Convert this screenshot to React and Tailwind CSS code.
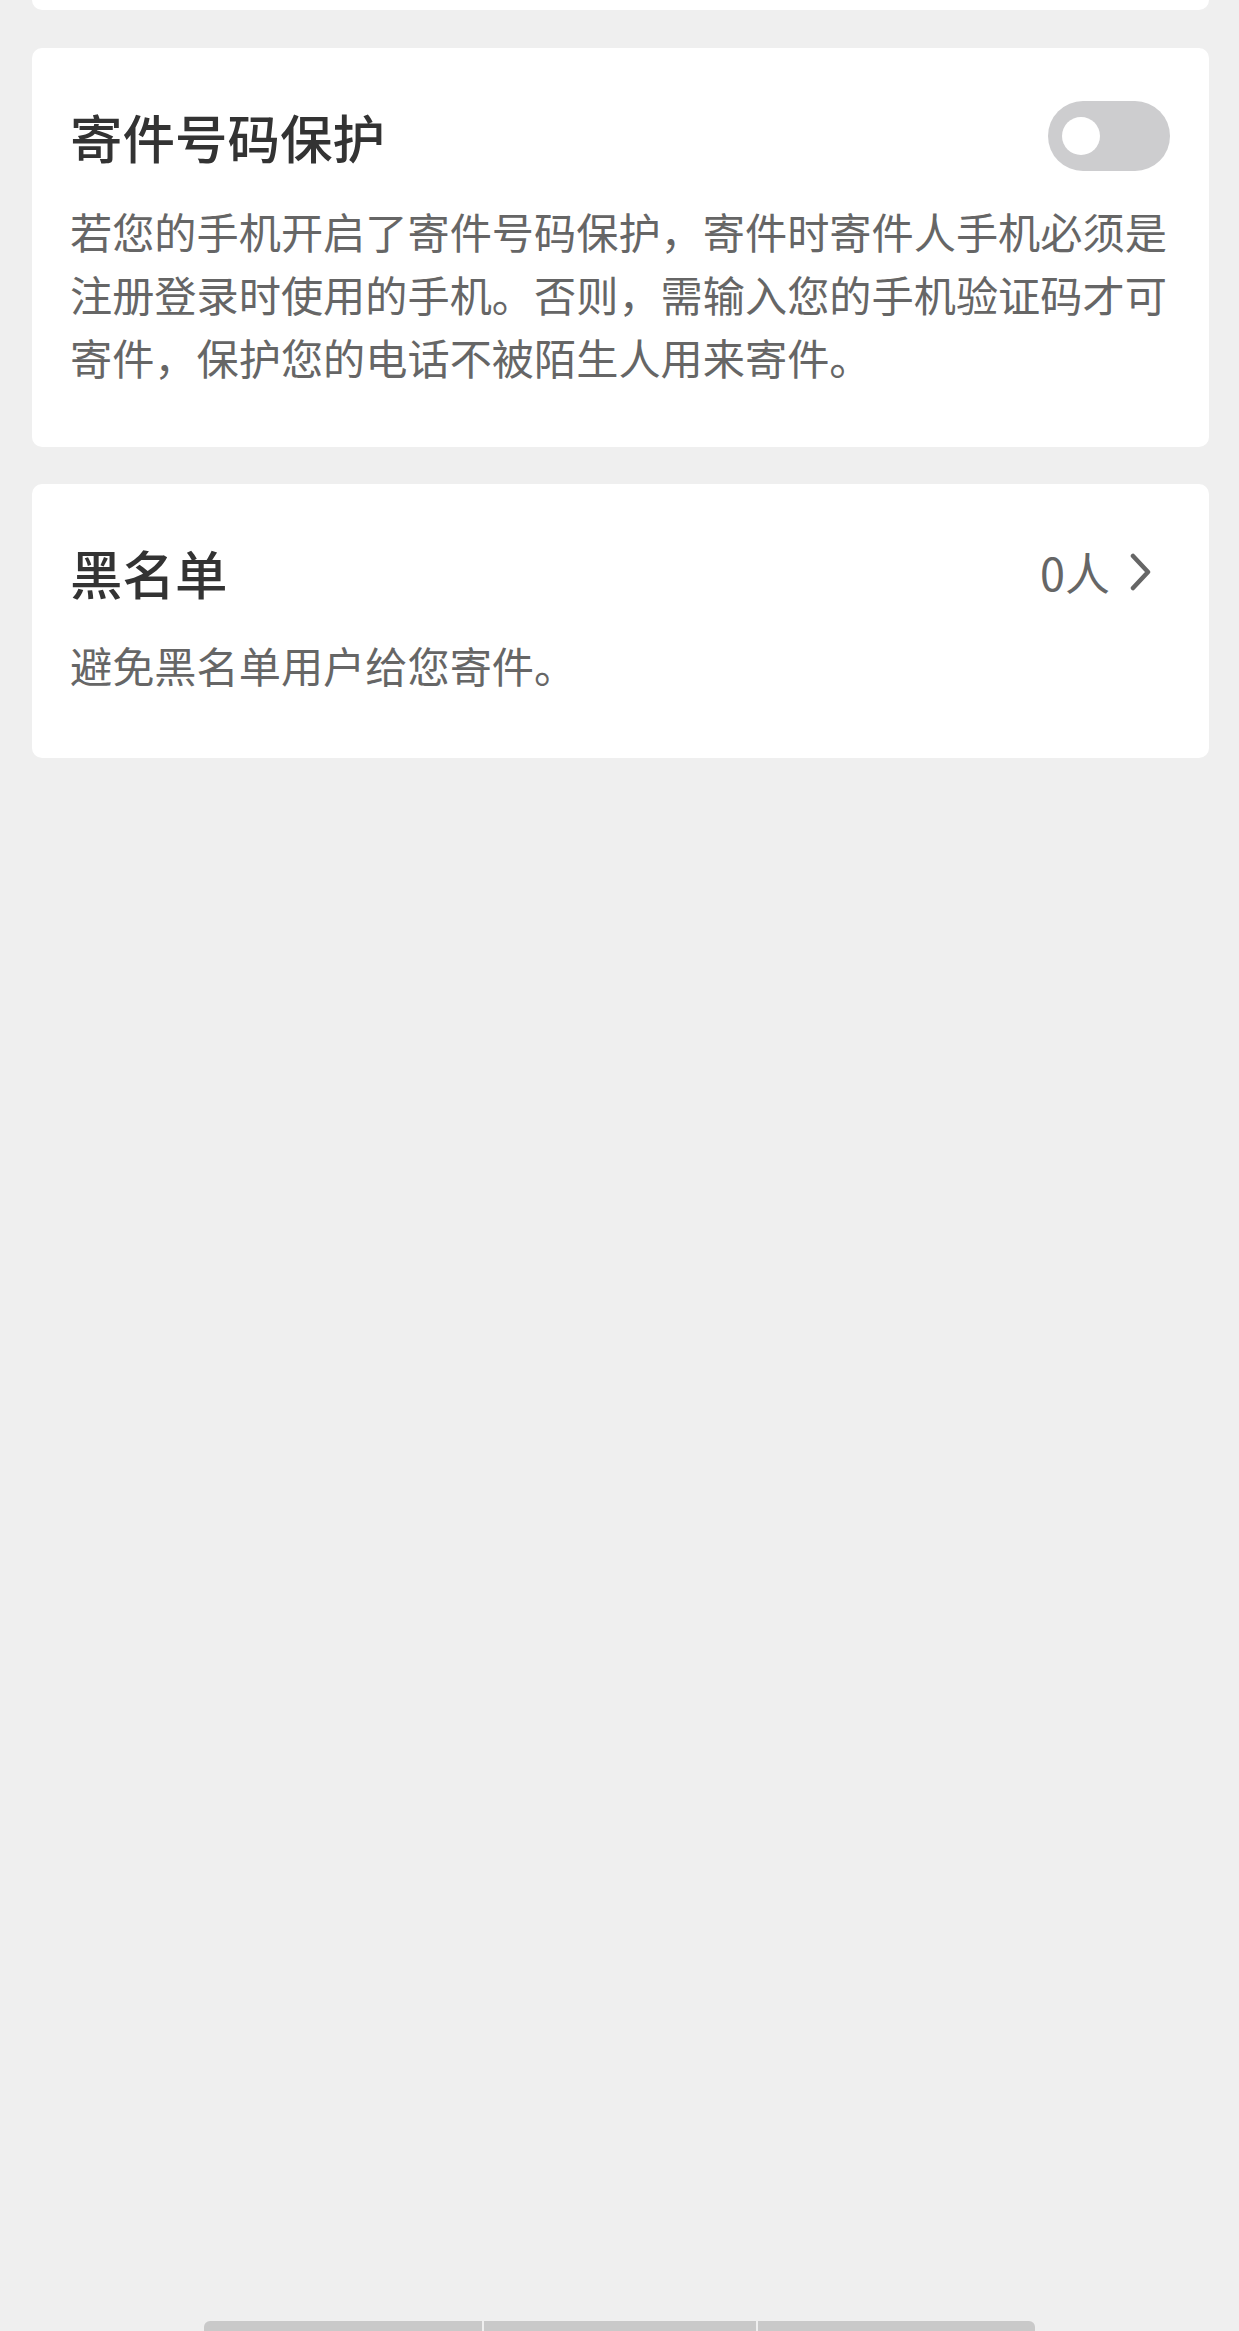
const cjk = { fontFamily: '"Noto Sans CJK SC", "Noto Sans", sans-serif' };

function Toggle() {
    return (
        <div className="w-[122px] h-[70px] rounded-full bg-[#cdcdcf] flex items-center pl-[14px] shrink-0">
            <div className="w-[38px] h-[38px] rounded-full bg-white"/>
        </div>
    );
}

function Chevron() {
    return (
        <svg width="22" height="38" viewBox="0 0 22 38" className="shrink-0">
            <path d="M3 3 L18 19 L3 35" fill="none" stroke="#666666" strokeWidth="4.5" strokeLinecap="round"
                  strokeLinejoin="round"/>
        </svg>
    );
}

export default function App() {
    return (
        <div className="h-[2331px] bg-[#efefef] flex flex-col overflow-hidden" style={cjk}>
            <div className="pl-[32px] pr-[30px]">
                {/* card scrolled off the top */}
                <div className="h-[10px] bg-white rounded-b-[10px]"/>

                {/* 寄件号码保护 */}
                <div className="mt-[38px] bg-white rounded-[10px] pl-[38px] pr-[38px] pt-[53px] pb-[59px]">
                    <div className="flex items-center justify-between">
                        <h2 className="text-[52.5px] leading-[70px] font-medium text-[#333333]">寄件号码保护</h2>
                        <div className="mr-[1px]"><Toggle/></div>
                    </div>
                    <p className="mt-[28px] text-[42.2px] leading-[63px] text-[#666666]">
                        若您的手机开启了寄件号码保护，寄件时寄件人手机必须是注册登录时使用的手机。否则，需输入您的手机验证码才可寄件，保护您的电话不被陌生人用来寄件。
                    </p>
                </div>

                {/* 黑名单 */}
                <div className="mt-[37px] bg-white rounded-[10px] pl-[38px] pr-[57px] pt-[52px] pb-[62px]">
                    <div className="flex items-center justify-between">
                        <h2 className="text-[52.5px] leading-[72px] font-medium text-[#333333]">黑名单</h2>
                        <div className="flex items-center gap-[20px]">
                            <span className="text-[45px] leading-[72px] text-[#666666]">0人</span>
                            <Chevron/>
                        </div>
                    </div>
                    <p className="mt-[25px] text-[42.2px] leading-[63px] text-[#666666]">避免黑名单用户给您寄件。</p>
                </div>
            </div>

            {/* bottom gesture bar */}
            <div className="mt-auto flex gap-[2px] pl-[204px]">
                <div className="w-[278px] h-[10px] bg-[#c9c9c9] rounded-tl-[6px]"/>
                <div className="w-[272px] h-[10px] bg-[#c9c9c9]"/>
                <div className="w-[277px] h-[10px] bg-[#c9c9c9] rounded-tr-[6px]"/>
            </div>
        </div>
    );
}
